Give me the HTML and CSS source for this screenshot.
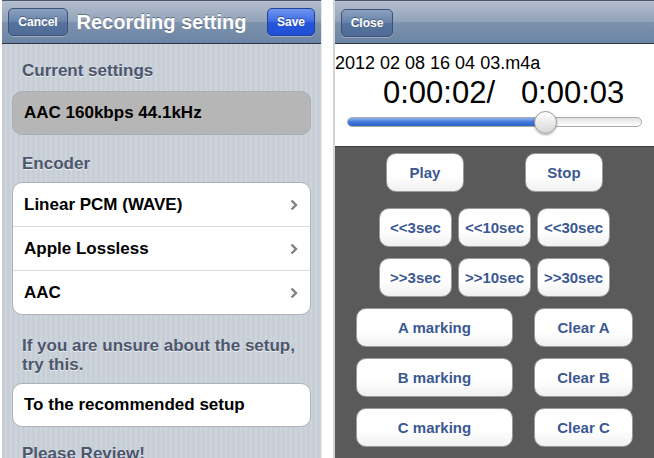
FILE: index.html
```html
<!DOCTYPE html>
<html lang="en">
<head>
  <meta charset="UTF-8">
  <meta name="viewport" content="width=device-width, initial-scale=1.0">
  <title>Recording setting</title>
  <link rel="stylesheet" href="styles.css">
</head>
<body>

<div class="screens">
  <!-- Settings screen -->
  <section class="screen settings">
    <div class="navbar">
      <span class="nav-btn btn-cancel">Cancel</span>
      <h1 class="nav-title">Recording setting</h1>
      <span class="nav-btn btn-save">Save</span>
    </div>
    <div class="settings-body">
      <p class="group-header first">Current settings</p>
      <div class="cell cell-current">AAC 160kbps 44.1kHz</div>

      <p class="group-header">Encoder</p>
      <ul class="group">
        <li class="row">Linear PCM (WAVE)
          <svg class="chevron" width="8" height="12" viewBox="0 0 8 12"><polyline points="1.5,1.5 6,6 1.5,10.5" fill="none" stroke="#808080" stroke-width="2.4"/></svg>
        </li>
        <li class="row">Apple Lossless
          <svg class="chevron" width="8" height="12" viewBox="0 0 8 12"><polyline points="1.5,1.5 6,6 1.5,10.5" fill="none" stroke="#808080" stroke-width="2.4"/></svg>
        </li>
        <li class="row">AAC
          <svg class="chevron" width="8" height="12" viewBox="0 0 8 12"><polyline points="1.5,1.5 6,6 1.5,10.5" fill="none" stroke="#808080" stroke-width="2.4"/></svg>
        </li>
      </ul>

      <p class="group-header note">If you are unsure about the setup, try this.</p>
      <div class="cell">To the recommended setup</div>

      <p class="group-header review">Please Review!</p>
    </div>
  </section>

  <!-- Player screen -->
  <section class="screen player">
    <div class="navbar">
      <span class="nav-btn btn-close">Close</span>
    </div>
    <div class="player-info">
      <p class="file-name">2012 02 08 16 04 03.m4a</p>
      <p class="time">0:00:02/&nbsp;&nbsp;&nbsp;0:00:03</p>
      <div class="slider">
        <div class="slider-fill"></div>
        <div class="slider-thumb"></div>
      </div>
    </div>
    <div class="pad">
      <div class="pad-row row-play">
        <button class="pad-btn w-play">Play</button>
        <button class="pad-btn w-play">Stop</button>
      </div>
      <div class="pad-row row-seek">
        <button class="pad-btn w-seek">&lt;&lt;3sec</button>
        <button class="pad-btn w-seek">&lt;&lt;10sec</button>
        <button class="pad-btn w-seek">&lt;&lt;30sec</button>
      </div>
      <div class="pad-row row-seek">
        <button class="pad-btn w-seek">&gt;&gt;3sec</button>
        <button class="pad-btn w-seek">&gt;&gt;10sec</button>
        <button class="pad-btn w-seek">&gt;&gt;30sec</button>
      </div>
      <div class="pad-row row-mark">
        <button class="pad-btn w-mark">A marking</button>
        <button class="pad-btn w-clear">Clear A</button>
      </div>
      <div class="pad-row row-mark">
        <button class="pad-btn w-mark">B marking</button>
        <button class="pad-btn w-clear">Clear B</button>
      </div>
      <div class="pad-row row-mark">
        <button class="pad-btn w-mark">C marking</button>
        <button class="pad-btn w-clear">Clear C</button>
      </div>
    </div>
  </section>
</div>

</body>
</html>
```

FILE: styles.css
```css
/* iPhone screens side by side */
body {
  margin: 0;
  background: #ffffff;
  font-family: "Liberation Sans", Arial, sans-serif;
  overflow: hidden;
}
p, h1, ul {
  margin: 0;
}
.screens {
  display: flex;
  height: 458px;
}
.screen {
  height: 458px;
  overflow: hidden;
}
.settings {
  width: 319px;
  margin-left: 2px;
  border-right: 1px solid #e4e7eb;
  background: repeating-linear-gradient(90deg, #c7ced6 0 3px, #ced4db 3px 5px);
}
.player {
  width: 319px;
  margin-left: 11px;
  border-left: 2px solid #d4d4d4;
  background: #ffffff;
}

/* Navigation bar */
.navbar {
  height: 42px;
  border-top: 1px solid #4a5566;
  border-bottom: 1px solid #2d3642;
  background: linear-gradient(#b3bece, #91a2b9 50%, #7d92ae 51%, #6c84a3);
  display: flex;
  align-items: center;
  padding: 0 6px;
}
.nav-title {
  flex: 1;
  margin-right: 12px;
  text-align: center;
  color: #ffffff;
  font-size: 20px;
  font-weight: bold;
  text-shadow: 0 -1px 0 rgba(0, 0, 0, 0.35);
}
.nav-btn {
  height: 26px;
  line-height: 26px;
  border-radius: 5px;
  border: 1px solid #3f5275;
  color: #ffffff;
  font-size: 12px;
  font-weight: bold;
  text-align: center;
  text-shadow: 0 -1px 0 rgba(0, 0, 0, 0.35);
  box-shadow: 0 1px 0 rgba(255, 255, 255, 0.3);
}
.btn-cancel,
.btn-close {
  background: linear-gradient(#8aa1c1, #6682aa 50%, #56739d 51%, #4f6c97);
}
.btn-cancel {
  width: 58px;
}
.btn-close {
  width: 50px;
  margin-top: 2px;
}
.btn-save {
  width: 46px;
  border-color: #23409a;
  background: linear-gradient(#6f95ee, #3a6ae3 50%, #2556da 51%, #1f50d6);
}

/* Grouped settings list */
.settings-body {
  padding: 0 10px;
}
.group-header {
  margin: 19px 10px 8px;
  font-size: 17px;
  line-height: 20px;
  font-weight: bold;
  color: #4c566c;
  text-shadow: 0 1px 0 rgba(255, 255, 255, 0.6);
}
.group-header.first {
  margin-top: 17px;
  margin-bottom: 10px;
}
.group-header.note {
  margin-top: 21px;
  margin-bottom: 9px;
  line-height: 19px;
}
.group-header.review {
  margin-top: 17px;
}
.cell {
  height: 42px;
  line-height: 42px;
  padding: 0 11px;
  background: #ffffff;
  border: 1px solid #aab2bd;
  border-radius: 10px;
  font-size: 17px;
  font-weight: bold;
  color: #000000;
}
.cell-current {
  background: #b6b6b6;
  border-color: #a9aeb4;
}
.group {
  list-style: none;
  padding: 0;
  background: #ffffff;
  border: 1px solid #aab2bd;
  border-radius: 10px;
}
.row {
  display: flex;
  justify-content: space-between;
  align-items: center;
  height: 43px;
  padding: 0 12px 0 11px;
  font-size: 17px;
  font-weight: bold;
  color: #000000;
}
.row + .row {
  border-top: 1px solid #dcdcdc;
}

/* Player info */
.player-info {
  box-sizing: border-box;
  height: 103px;
  padding-top: 9px;
  border-bottom: 1px solid #3c3c3c;
}
.file-name {
  font-size: 18px;
  line-height: 21px;
  color: #000000;
  white-space: nowrap;
}
.time {
  margin-top: 3px;
  padding-left: 48px;
  font-size: 31px;
  line-height: 32px;
  color: #000000;
  white-space: nowrap;
}
.slider {
  position: relative;
  margin: 8px 12px 0;
  height: 8px;
  border: 1px solid #a9a9a9;
  border-radius: 5px;
  background: linear-gradient(#e2e2e2, #ffffff);
}
.slider-fill {
  width: 67%;
  height: 100%;
  border-radius: 5px 0 0 5px;
  background: linear-gradient(#8fb4f0, #3e78da 50%, #2d62c8);
}
.slider-thumb {
  position: absolute;
  left: 186px;
  top: -7px;
  width: 21px;
  height: 21px;
  border-radius: 50%;
  border: 1px solid #9a9a9a;
  background: linear-gradient(#ffffff, #d6d6d6);
  box-shadow: 0 1px 2px rgba(0, 0, 0, 0.3);
}

/* Control pad */
.pad {
  height: 311px;
  background: #5a5a5a;
  padding-top: 6px;
  display: flex;
  flex-direction: column;
  gap: 11px;
}
.pad-row {
  display: flex;
  justify-content: center;
}
.row-play {
  gap: 61px;
  margin-bottom: 5px;
}
.row-seek {
  gap: 6px;
}
.row-mark {
  gap: 21px;
}
.pad-btn {
  height: 39px;
  padding: 0;
  border: 1px solid #9a9a9a;
  border-radius: 10px;
  background: linear-gradient(#ffffff 60%, #f0f0f0);
  color: #3b5893;
  font-family: "Liberation Sans", Arial, sans-serif;
  font-size: 15px;
  font-weight: bold;
}
.w-play {
  width: 78px;
}
.w-seek {
  width: 73px;
}
.w-mark {
  width: 157px;
}
.w-clear {
  width: 99px;
}
```
